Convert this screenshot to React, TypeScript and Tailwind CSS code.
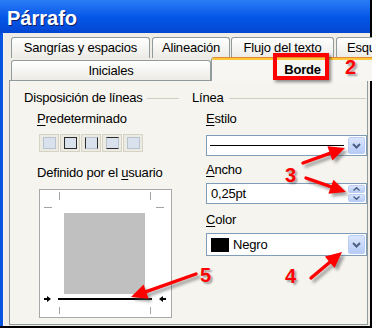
import React from "react";

const font = { fontFamily: '"Liberation Sans", Arial, sans-serif' };

function Tab({ label, w, className = "" }: { label: string; w: string; className?: string }) {
  return (
    <div
      className={`${w} h-full shrink-0 flex items-center justify-center border border-b-0 border-[#919b9c] rounded-t-[3px] bg-gradient-to-b from-white to-[#ecebe6] text-[13px] tracking-[-0.2px] text-black ${className}`}
    >
      <span className="whitespace-nowrap">{label}</span>
    </div>
  );
}

function Preset({ variant }: { variant: number }) {
  const inner: Record<number, string> = {
    0: "border border-[#b7c3cf]",
    1: "border border-[#2b2b2b]",
    2: "border-x border-x-[#2b2b2b] border-y border-y-[#b7c3cf]",
    3: "border-y border-y-[#2b2b2b] border-x border-x-[#b7c3cf]",
    4: "border border-[#b7c3cf]",
  };
  return (
    <div className="w-[20px] h-[18px] border border-[#d6d3c4] bg-[#ecebe3] flex items-center justify-center">
      <div className={`w-[13px] h-[12px] bg-[#d9e2ec] ${inner[variant]}`} />
    </div>
  );
}

function ComboButton() {
  return (
    <div className="w-[17px] h-full rounded-[2px] border border-[#b9cdf5] bg-gradient-to-b from-[#dbe6fd] to-[#b6cbf6] flex items-center justify-center">
      <svg width="9" height="6" viewBox="0 0 9 6">
        <path d="M1 1 L4.5 4.5 L8 1" fill="none" stroke="#4d6185" strokeWidth="2" />
      </svg>
    </div>
  );
}

function Label({ children, className = "" }: { children: React.ReactNode; className?: string }) {
  return <div className={`h-[16px] leading-[16px] text-[13px] tracking-[-0.2px] text-black whitespace-nowrap ${className}`}>{children}</div>;
}

function Preview() {
  const tick = "#a3a3a3";
  return (
    <div className="w-[133px] h-[129px] ml-[29px] mt-[8px] bg-white border border-[#a8a8a8]">
      <svg width="131" height="127" viewBox="0 0 131 127">
        <rect x="24" y="23" width="81" height="81" fill="#c0c0c0" />
        <line x1="19.5" y1="2" x2="19.5" y2="10" stroke={tick} />
        <line x1="110.5" y1="2" x2="110.5" y2="10" stroke={tick} />
        <line x1="4" y1="17.5" x2="12" y2="17.5" stroke={tick} />
        <line x1="116" y1="17.5" x2="124" y2="17.5" stroke={tick} />
        <line x1="19.5" y1="117" x2="19.5" y2="124" stroke={tick} />
        <line x1="110.5" y1="117" x2="110.5" y2="124" stroke={tick} />
        <rect x="18" y="108" width="94" height="2" fill="#000" />
        <path d="M4 108 L7 108 L7 106 L11 109 L7 112 L7 110 L4 110 Z" fill="#000" />
        <path d="M126 108 L123 108 L123 106 L119 109 L123 112 L123 110 L126 110 Z" fill="#000" />
      </svg>
    </div>
  );
}

function Arrow({ x1, y1, x2, y2 }: { x1: number; y1: number; x2: number; y2: number }) {
  const dx = x2 - x1;
  const dy = y2 - y1;
  const len = Math.sqrt(dx * dx + dy * dy);
  const ux = dx / len;
  const uy = dy / len;
  const hl = 16;
  const hw = 7.5;
  const bx = x2 - ux * hl;
  const by = y2 - uy * hl;
  const p1 = `${bx - uy * hw},${by + ux * hw}`;
  const p2 = `${bx + uy * hw},${by - ux * hw}`;
  const shape = (fill: string, off: number) => (
    <g transform={`translate(${off},${off})`}>
      <line x1={x1} y1={y1} x2={bx + ux * 2} y2={by + uy * 2} stroke={fill} strokeWidth="3.4" strokeLinecap="round" />
      <polygon points={`${x2},${y2} ${p1} ${p2}`} fill={fill} />
    </g>
  );
  return (
    <g>
      <g filter="url(#blur)" opacity="0.55">{shape("#555", 3)}</g>
      {shape("#ff0000", 0)}
    </g>
  );
}

function Num({ n, left, top }: { n: string; left: string; top: string }) {
  return (
    <div
      className={`absolute z-30 ${left} ${top} text-[20px] leading-[20px] font-bold text-[#ff0000] [text-shadow:2px_2px_2px_rgba(0,0,0,0.35)]`}
    >
      {n}
    </div>
  );
}

export default function App() {
  return (
    <div className="relative w-[372px] h-[328px] overflow-hidden bg-black" style={font}>
      <div className="w-[370px] h-[326px] flex flex-col">
        {/* Title bar */}
        <div className="h-[33px] shrink-0 flex items-center pl-[7px] pt-[2px] bg-gradient-to-b from-[#2b7cf5] via-[#0658e8] to-[#0346d2]">
          <span className="text-white font-bold text-[20px] leading-none [text-shadow:1px_1px_0_#0a1e6a]">Párrafo</span>
        </div>
        {/* Body */}
        <div className="flex-1 flex min-h-0">
          <div className="w-[3px] shrink-0 bg-[#0754e0]" />
          <div className="flex-1 min-w-0 bg-[#efede5] flex flex-col pt-[4px] pl-[5px] pr-[2px] pb-[1px] border-l border-[#f7f6f0]">
            {/* Tab row 1 */}
            <div className="h-[21px] shrink-0 flex pl-[2px] gap-[2px]">
              <Tab label="Sangrías y espacios" w="w-[139px]" />
              <Tab label="Alineación" w="w-[78px]" />
              <Tab label="Flujo del texto" w="w-[103px]" className="-ml-[1px]" />
              <Tab label="Esquema y numeración" w="w-[140px]" className="justify-start pl-[10px]" />
            </div>
            {/* Tab row 2 */}
            <div className="h-[22px] shrink-0 flex items-end pl-[2px] relative z-10">
              <div className="w-[200px] h-[20px] shrink-0 flex items-center justify-center border border-b-0 border-[#919b9c] rounded-t-[3px] bg-gradient-to-b from-white to-[#ecebe6] text-[13px] tracking-[-0.2px]">
                Iniciales
              </div>
              <div className="w-[183px] h-[24px] -mb-[1px] shrink-0 flex flex-col border-x border-[#919b9c] bg-[#f7f6f2] rounded-t-[3px] overflow-hidden">
                <div className="h-[1px] bg-[#e68b2c]" />
                <div className="h-[2px] bg-[#ffc83c]" />
                <div className="flex-1 flex items-center justify-center pb-[2px] text-[13px] font-bold tracking-[-0.2px]">Borde</div>
              </div>
            </div>
            {/* Panel */}
            <div className="flex-1 min-h-0 flex border border-[#919b9c] bg-[#f5f4ef]">
              {/* Left column */}
              <div className="w-[174px] shrink-0 flex flex-col">
                <div className="mt-[9px] h-[16px] flex items-center pl-[14px] pr-[5px]">
                  <Label>Disposición de líneas</Label>
                  <div className="flex-1 h-px bg-[#d0d0bf] ml-[4px]" />
                </div>
                <Label className="mt-[5px] pl-[27px]">
                  <span className="underline underline-offset-2">P</span>redeterminado
                </Label>
                <div className="mt-[7px] pl-[29px] flex gap-[1px]">
                  {[0, 1, 2, 3, 4].map((v) => (
                    <Preset key={v} variant={v} />
                  ))}
                </div>
                <Label className="mt-[13px] pl-[27px]">
                  Definido por el <span className="underline underline-offset-2">u</span>suario
                </Label>
                <Preview />
              </div>
              {/* Right column */}
              <div className="flex-1 min-w-0 flex flex-col">
                <div className="mt-[9px] h-[16px] flex items-center pl-[8px] pr-[1px]">
                  <Label>Línea</Label>
                  <div className="flex-1 h-px bg-[#d0d0bf] ml-[5px]" />
                </div>
                <Label className="mt-[5px] pl-[22px]">
                  <span className="underline underline-offset-2">E</span>stilo
                </Label>
                <div className="mt-[8px] ml-[22px] w-[161px] h-[21px] border border-[#7f9db9] bg-white flex items-center p-[1px]">
                  <div className="flex-1 h-px bg-black ml-[2px] mr-[4px]" />
                  <ComboButton />
                </div>
                <Label className="mt-[6px] pl-[22px]">
                  <span className="underline underline-offset-2">A</span>ncho
                </Label>
                <div className="mt-[5px] ml-[22px] w-[161px] h-[21px] border border-[#7f9db9] bg-white flex items-center p-[1px]">
                  <div className="flex-1 pl-[3px] text-[13px] tracking-[-0.2px]">0,25pt</div>
                  <div className="w-[17px] h-full flex flex-col gap-[1px]">
                    <div className="flex-1 rounded-[2px] border border-[#b9cdf5] bg-gradient-to-b from-[#dbe6fd] to-[#b6cbf6] flex items-center justify-center">
                      <svg width="7" height="4" viewBox="0 0 7 4">
                        <path d="M0.5 3.5 L3.5 0.7 L6.5 3.5" fill="none" stroke="#4d6185" strokeWidth="1.4" />
                      </svg>
                    </div>
                    <div className="flex-1 rounded-[2px] border border-[#b9cdf5] bg-gradient-to-b from-[#dbe6fd] to-[#b6cbf6] flex items-center justify-center">
                      <svg width="7" height="4" viewBox="0 0 7 4">
                        <path d="M0.5 0.5 L3.5 3.3 L6.5 0.5" fill="none" stroke="#4d6185" strokeWidth="1.4" />
                      </svg>
                    </div>
                  </div>
                </div>
                <Label className="mt-[8px] pl-[22px]">
                  <span className="underline underline-offset-2">C</span>olor
                </Label>
                <div className="mt-[5px] ml-[22px] w-[161px] h-[23px] border border-[#7f9db9] bg-white flex items-center p-[1px]">
                  <div className="w-[18px] h-[14px] bg-black ml-[3px]" />
                  <div className="flex-1 pl-[4px] text-[13px] tracking-[-0.2px]">Negro</div>
                  <ComboButton />
                </div>
              </div>
            </div>
          </div>
        </div>
      </div>

      {/* Annotations */}
      <div className="absolute z-20 left-[273px] top-[53px] w-[56px] h-[27px] border-[4px] border-[#ff0000] shadow-[2px_2px_3px_rgba(0,0,0,0.45)]" />
      <svg className="absolute z-20 left-0 top-0" width="372" height="328" viewBox="0 0 372 328">
        <defs>
          <filter id="blur" x="-20%" y="-20%" width="140%" height="140%">
            <feGaussianBlur stdDeviation="1.5" />
          </filter>
        </defs>
        <Arrow x1={303} y1={163} x2={345} y2={148} />
        <Arrow x1={306} y1={178} x2={346} y2={192} />
        <Arrow x1={311} y1={278} x2={342} y2={252} />
        <Arrow x1={196} y1={274} x2={131} y2={297} />
      </svg>
      <Num n="2" left="left-[345px]" top="top-[57px]" />
      <Num n="3" left="left-[285px]" top="top-[165px]" />
      <Num n="4" left="left-[285px]" top="top-[266px]" />
      <Num n="5" left="left-[200px]" top="top-[265px]" />
    </div>
  );
}
